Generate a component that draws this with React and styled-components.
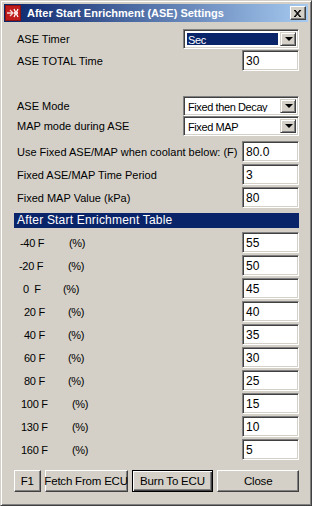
import styled, { createGlobalStyle } from "styled-components";

const GlobalStyle = createGlobalStyle`
  body {
    margin: 0;
    background: #d4d0c8;
  }
`;

const Window = styled.div`
  width: 312px;
  height: 506px;
  box-sizing: border-box;
  background: #d4d0c8;
  border: 1px solid;
  border-color: #d4d0c8 #404040 #404040 #d4d0c8;
  box-shadow: inset 1px 1px 0 #ffffff, inset -1px -1px 0 #808080;
  padding: 3px;
  display: flex;
  flex-direction: column;
  font-family: "Liberation Sans", Arial, sans-serif;
  font-size: 11px;
  color: #000;
`;

const TitleBar = styled.div`
  height: 18px;
  background: linear-gradient(to right, #0a246a, #a6caf0);
  display: flex;
  align-items: center;
  padding: 0 2px 0 1px;
  gap: 6px;
`;

const Title = styled.div`
  flex: 1;
  color: #fff;
  font-weight: bold;
  font-size: 11px;
  white-space: nowrap;
`;

const CloseBox = styled.div`
  width: 16px;
  height: 14px;
  box-sizing: border-box;
  background: #d4d0c8;
  border: 1px solid;
  border-color: #ffffff #404040 #404040 #ffffff;
  box-shadow: inset -1px -1px 0 #808080;
  display: flex;
  align-items: center;
  justify-content: center;
`;

const Client = styled.div`
  flex: 1;
  display: flex;
  flex-direction: column;
  padding: 7px 9px 0 10px;
`;

const Row = styled.div`
  display: flex;
  align-items: center;
  justify-content: space-between;
  height: ${(p) => p.$h || 21}px;
  margin-top: ${(p) => p.$mt || 0}px;
`;

const Label = styled.span`
  padding-left: 3px;
  white-space: nowrap;
`;

const Sunken = styled.div`
  box-sizing: border-box;
  height: 100%;
  background: #fff;
  border: 1px solid;
  border-color: #808080 #ffffff #ffffff #808080;
  box-shadow: inset 1px 1px 0 #404040, inset -1px -1px 0 #d4d0c8;
`;

const TextBox = styled(Sunken)`
  width: 57px;
  padding: 2px 0 0 3px;
  line-height: 16px;
  font-size: 12px;
`;

const Combo = styled(Sunken)`
  width: 116px;
  display: flex;
  padding: 2px;
`;

const ComboText = styled.div`
  flex: 1;
  min-width: 0;
  overflow: hidden;
  white-space: nowrap;
  margin-right: 1px;
  padding-left: 1px;
  line-height: 14px;
  font-size: 11px;
  letter-spacing: -0.4px;
  background: ${(p) => (p.$selected ? "#0a246a" : "#fff")};
  color: ${(p) => (p.$selected ? "#fff" : "#000")};
  border: 1px solid #fff;
`;

const DropButton = styled.div`
  width: 16px;
  flex: none;
  box-sizing: border-box;
  background: #d4d0c8;
  border: 1px solid;
  border-color: #d4d0c8 #404040 #404040 #d4d0c8;
  box-shadow: inset 1px 1px 0 #ffffff, inset -1px -1px 0 #808080;
  display: flex;
  align-items: center;
  justify-content: center;
`;

const Arrow = styled.div`
  width: 0;
  height: 0;
  border-left: 4px solid transparent;
  border-right: 4px solid transparent;
  border-top: 4px solid #000;
  margin-left: 1px;
`;

const SectionHeader = styled.div`
  height: 15px;
  margin-top: 5px;
  background: #0a246a;
  color: #fff;
  padding-left: 3px;
  line-height: 15px;
  font-size: 12px;
  letter-spacing: 0.2px;
  white-space: nowrap;
`;

const TableLabel = styled.div`
  display: flex;
  color: #000;
  letter-spacing: -0.3px;
`;

const Temp = styled.span`
  box-sizing: border-box;
  padding-left: ${(p) => p.$x}px;
  width: ${(p) => p.$w}px;
  white-space: pre;
`;

const ButtonBar = styled.div`
  display: flex;
  margin-top: 10px;
  height: 22px;
  gap: 4px;
`;

const Button = styled.div`
  box-sizing: border-box;
  width: ${(p) => p.$w}px;
  background: #d4d0c8;
  display: flex;
  align-items: center;
  justify-content: center;
  font-size: 11.5px;
  letter-spacing: -0.2px;
  white-space: nowrap;
  border: 1px solid;
  border-color: ${(p) =>
    p.$default ? "#000" : "#ffffff #404040 #404040 #ffffff"};
  box-shadow: ${(p) =>
    p.$default
      ? "inset 1px 1px 0 #fff, inset -1px -1px 0 #404040, inset -2px -2px 0 #808080"
      : "inset -1px -1px 0 #808080"};
`;

const ComboBox = ({ value, selected }) => (
  <Combo>
    <ComboText $selected={selected}>{value}</ComboText>
    <DropButton>
      <Arrow />
    </DropButton>
  </Combo>
);

const AppIcon = () => (
  <svg width="16" height="16" viewBox="0 0 16 16">
    <rect x="0" y="0" width="16" height="16" fill="#8c1010" />
    <rect x="1" y="1" width="14" height="14" fill="#c01c1c" />
    <path d="M2 8h5M5 5l3 3-3 3" stroke="#f4d8d8" strokeWidth="1.3" fill="none" />
    <path d="M9 4l4 8M13 4l-4 8" stroke="#ffffff" strokeWidth="1.3" fill="none" />
    <rect x="9" y="7" width="4" height="2" fill="#ffe0e0" />
  </svg>
);

const CloseIcon = () => (
  <svg width="8" height="7" viewBox="0 0 8 7">
    <path d="M0 0l6 7M1 0l6 7M7 0L1 7M6 0L0 7" stroke="#000" strokeWidth="1" />
  </svg>
);

const table = [
  { t: "-40 F", v: "55", x: 6, p: 55 },
  { t: "-20 F", v: "50", x: 5, p: 54 },
  { t: "0  F", v: "45", x: 9, p: 49 },
  { t: "20 F", v: "40", x: 10, p: 54 },
  { t: "40 F", v: "35", x: 10, p: 54 },
  { t: "60 F", v: "30", x: 10, p: 54 },
  { t: "80 F", v: "25", x: 10, p: 54 },
  { t: "100 F", v: "15", x: 7, p: 58 },
  { t: "130 F", v: "10", x: 7, p: 58 },
  { t: "160 F", v: "5", x: 7, p: 58 },
];

export default function App() {
  return (
    <>
      <GlobalStyle />
      <Window>
        <TitleBar>
          <AppIcon />
          <Title>After Start Enrichment (ASE) Settings</Title>
          <CloseBox>
            <CloseIcon />
          </CloseBox>
        </TitleBar>
        <Client>
          <Row $h={20}>
            <Label>ASE Timer</Label>
            <ComboBox value="Sec" selected />
          </Row>
          <Row $mt={1}>
            <Label>ASE TOTAL Time</Label>
            <TextBox>30</TextBox>
          </Row>
          <Row $h={20} $mt={25}>
            <Label>ASE Mode</Label>
            <ComboBox value="Fixed then Decay" />
          </Row>
          <Row $h={20}>
            <Label>MAP mode during ASE</Label>
            <ComboBox value="Fixed MAP" />
          </Row>
          <Row $mt={5}>
            <Label>Use Fixed ASE/MAP when coolant below: (F)</Label>
            <TextBox>80.0</TextBox>
          </Row>
          <Row $mt={2}>
            <Label>Fixed ASE/MAP Time Period</Label>
            <TextBox>3</TextBox>
          </Row>
          <Row $mt={2}>
            <Label>Fixed MAP Value (kPa)</Label>
            <TextBox>80</TextBox>
          </Row>
          <SectionHeader>After Start Enrichment Table</SectionHeader>
          {table.map((r, i) => (
            <Row key={r.t} $mt={i === 0 ? 4 : 2}>
              <TableLabel>
                <Temp $x={r.x} $w={r.p}>
                  {r.t}
                </Temp>
                <span>(%)</span>
              </TableLabel>
              <TextBox>{r.v}</TextBox>
            </Row>
          ))}
          <ButtonBar>
            <Button $w={27}>F1</Button>
            <Button $w={83}>Fetch From ECU</Button>
            <Button $w={83} $default>
              Burn To ECU
            </Button>
            <Button $w={83}>Close</Button>
          </ButtonBar>
        </Client>
      </Window>
    </>
  );
}
